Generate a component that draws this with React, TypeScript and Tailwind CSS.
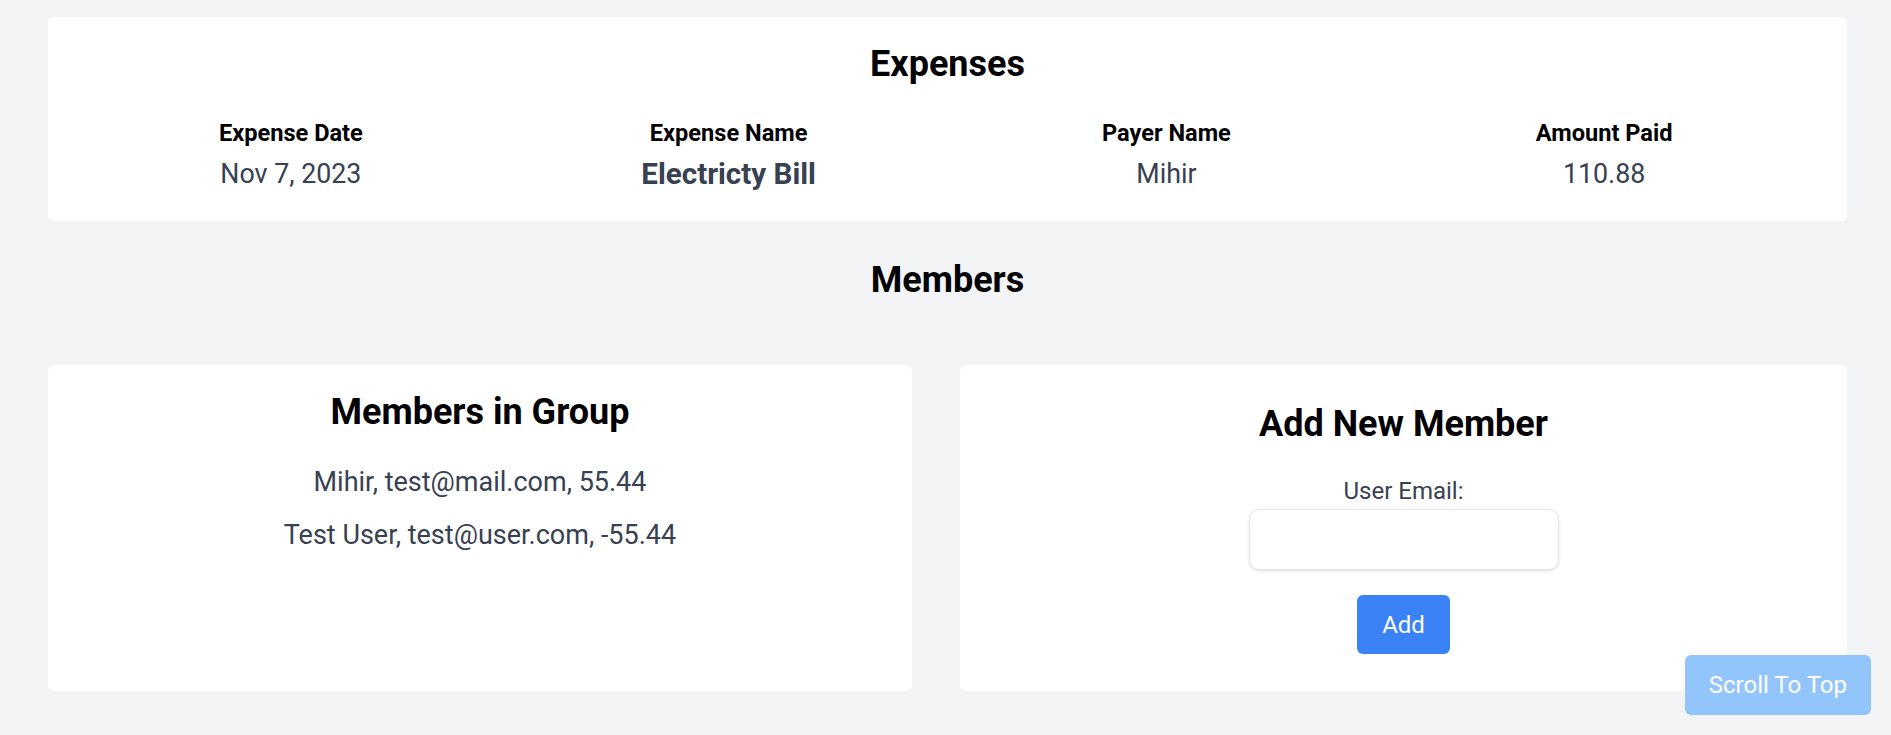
const expense = {
  date: "Nov 7, 2023",
  name: "Electricty Bill",
  payer: "Mihir",
  amount: "110.88",
};

const members = [
  { name: "Mihir", email: "test@mail.com", balance: "55.44" },
  { name: "Test User", email: "test@user.com", balance: "-55.44" },
];

export default function App() {
  return (
    <div className="min-h-screen bg-gray-100 pt-[17px] pl-[48px] pr-[44px] font-['Roboto',sans-serif]">
      {/* Expense details */}
      <section className="rounded-md bg-white px-[24px] pt-[26px] pb-[28px]">
        <h2 className="mb-[32px] text-center text-[36px] leading-[43px] font-bold text-black">
          Expenses
        </h2>
        <div className="grid grid-cols-4 text-center">
          <div>
            <div className="text-[23.6px] leading-[30px] font-bold text-black">Expense Date</div>
            <div className="mt-[7px] text-[26.8px] leading-[38px] text-[#374151]">{expense.date}</div>
          </div>
          <div>
            <div className="text-[23.6px] leading-[30px] font-bold text-black">Expense Name</div>
            <div className="mt-[7px] text-[29.6px] leading-[38px] font-bold text-[#374151]">
              {expense.name}
            </div>
          </div>
          <div>
            <div className="text-[23.6px] leading-[30px] font-bold text-black">Payer Name</div>
            <div className="mt-[7px] text-[26.8px] leading-[38px] text-[#374151]">{expense.payer}</div>
          </div>
          <div>
            <div className="text-[23.6px] leading-[30px] font-bold text-black">Amount Paid</div>
            <div className="mt-[7px] text-[26.8px] leading-[38px] text-[#374151]">{expense.amount}</div>
          </div>
        </div>
      </section>

      <h2 className="mt-[38px] text-center text-[36px] leading-[43px] font-bold text-black">
        Members
      </h2>

      <div className="mt-[63px] flex gap-[48px] pb-[40px]">
        <div className="w-[864px] rounded-md bg-white px-[24px] pt-[26px] text-center">
          <h3 className="text-[36px] leading-[43px] font-bold text-black">Members in Group</h3>
          <ul className="mt-[29px] flex flex-col gap-[15px]">
            {members.map((m) => (
              <li key={m.email} className="text-[27px] leading-[38px] text-[#374151]">
                {m.name}, {m.email}, {m.balance}
              </li>
            ))}
          </ul>
        </div>

        <div className="flex flex-1 flex-col items-center rounded-md bg-white pt-[38px] pb-[37px]">
          <h3 className="text-[36px] leading-[43px] font-bold text-black">Add New Member</h3>
          <label className="mt-[28px] text-[24px] leading-[34px] text-[#374151]">User Email:</label>
          <input
            type="email"
            className="mt-[1px] h-[61px] w-[310px] rounded-[10px] border border-gray-200 bg-white px-3 text-[24px] shadow-sm outline-none"
          />
          <button className="mt-[25px] h-[59px] rounded-md bg-[#3b82f6] px-[25px] text-[24px] leading-[34px] text-white">
            Add
          </button>
        </div>
      </div>

      <button className="fixed right-[20px] bottom-[20px] h-[60px] rounded-md bg-[#93c5fd] px-[24px] text-[24px] leading-[34px] text-white">
        Scroll To Top
      </button>
    </div>
  );
}
